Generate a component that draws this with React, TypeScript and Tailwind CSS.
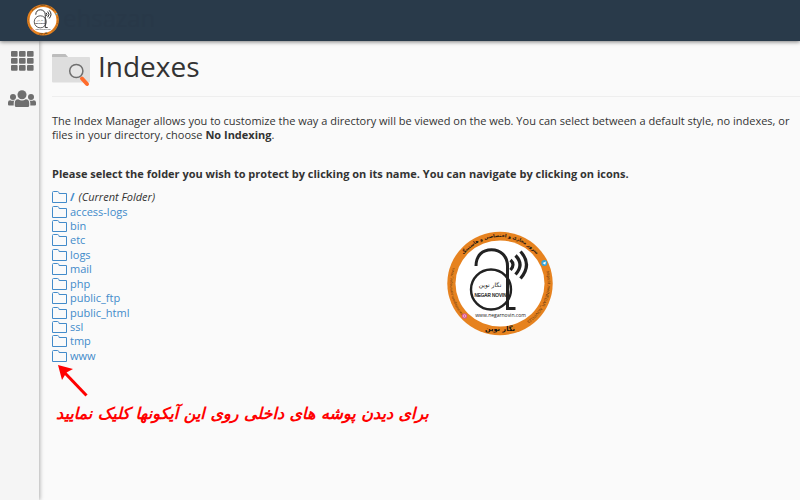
import { useId } from 'react';

const FOLDERS = [
  'access-logs',
  'bin',
  'etc',
  'logs',
  'mail',
  'php',
  'public_ftp',
  'public_html',
  'ssl',
  'tmp',
  'www',
];

function FolderOutline() {
  return (
    <svg viewBox="0 0 16 12" className="h-3 w-4 shrink-0" fill="none" stroke="#428bca" aria-hidden="true">
      <path d="M.5 1.5Q.5.5 1.5.5H5.5Q6.5.5 6.8 1.5L7.1 2.5H14.5V11.5H.5Z" />
    </svg>
  );
}

function AppsIcon() {
  return (
    <svg viewBox="0 0 24 20" className="h-5 w-6" fill="#6f6f6f" aria-hidden="true">
      {[0, 7, 14].map((y) =>
        [1, 9, 17].map((x) => <rect key={`${x}-${y}`} x={x} y={y} width="6.6" height="5.8" rx="1" />),
      )}
    </svg>
  );
}

function UsersIcon() {
  return (
    <svg viewBox="0 0 28 17" className="h-[17px] w-7" fill="#6f6f6f" aria-hidden="true">
      <circle cx="14" cy="4.7" r="4.5" />
      <circle cx="5" cy="7" r="3" />
      <circle cx="23" cy="7" r="3" />
      <path d="M6.8 15.5V13Q6.8 9.3 10.2 9.2Q14 12 17.8 9.2Q21.2 9.3 21.2 13V15.5Q21.2 17 19.7 17H8.3Q6.8 17 6.8 15.5Z" />
      <path d="M0 14.5V12.5Q0 10.3 2.3 10.2Q4.5 11.3 6.6 10.2Q5.7 11.5 5.7 13V15.5H1Q0 15.5 0 14.5Z" />
      <path d="M28 14.5V12.5Q28 10.3 25.7 10.2Q23.5 11.3 21.4 10.2Q22.3 11.5 22.3 13V15.5H27Q28 15.5 28 14.5Z" />
    </svg>
  );
}

function IndexesIcon() {
  return (
    <svg viewBox="0 0 38 34" className="mt-1 h-[34px] w-[38px] shrink-0" aria-hidden="true">
      <path d="M0 5V2Q0 1 1 1H13.5L16 4V5Z" fill="#bdbdbd" />
      <path d="M0 4H37Q38 4 38 5V28.5Q38 29.5 37 29.5H1Q0 29.5 0 28.5Z" fill="#dedede" />
      <path d="M30 25.5L35 31" stroke="#ff6c2c" strokeWidth="4" strokeLinecap="round" />
      <circle cx="24.3" cy="18" r="6.6" fill="#e6e6e6" stroke="#6f6f6f" strokeWidth="1.5" />
    </svg>
  );
}

function NegarNovinLogo({ className }: { className: string }) {
  const id = useId();

  return (
    <svg viewBox="7 6 106 105" className={className} role="img" aria-label="Negar Novin">
      <defs>
        <path id={`${id}top`} d="M13.5 58.5A46.5 46.5 0 0 1 106.500 58.500" />
        <path id={`${id}left`} d="M45 103.500A47 46.500 0 0 1 25 27" />
        <path id={`${id}right`} d="M105.500 44A47 46.500 0 0 1 80 100" />
      </defs>
      <ellipse cx="60" cy="58.5" rx="52.7" ry="51.7" fill="#e6821f" />
      <ellipse cx="60" cy="58.5" rx="44.5" ry="43" fill="#fff" />

      {/* Padlock "a" with signal waves */}
      <g fill="none" stroke="#222">
        <path d="M36 41C36 30.5 42.5 24.7 51.5 24.7S67.5 31 67.5 41V83.5H75.5" strokeWidth="3" />
        <circle cx="51" cy="64.5" r="20" strokeWidth="2.4" />
        <g strokeWidth="3.2">
          <path d="M70.5 35Q75.5 39.5 70.5 45" />
          <path d="M75.500 30.500Q84.500 39.500 75.500 49.500" />
          <path d="M80.500 26.500Q92.500 39.500 80.500 53.500" />
        </g>
      </g>

      <g fill="#222" textAnchor="middle">
        <text x="50" y="61.5" fontSize="6" fontFamily="DejaVu Sans, sans-serif">نگار نوین</text>
        <text x="50.5" y="71.7" fontSize="4.6" fontFamily="Liberation Sans, sans-serif" stroke="#222" strokeWidth=".2">NEGAR NOVIN</text>
        <text x="60.5" y="92" fontSize="5" fontFamily="Open Sans, sans-serif">www.negarnovin.com</text>
        <text x="60" y="106" fontSize="6.600" fontWeight="700" fontFamily="DejaVu Sans, sans-serif" fill="#111">نگار نوین</text>
        <text fontSize="4.6" fontWeight="700" fontFamily="DejaVu Sans, sans-serif" fill="#111">
          <textPath href={`#${id}top`} startOffset="50%">سرور مجازی و اختصاصی و هاستینگ</textPath>
        </text>
        <text fontSize="3.5" fontFamily="Liberation Sans, sans-serif" fill="#5c330c">
          <textPath href={`#${id}left`} startOffset="52%">www.instagram.com/negar_novin</textPath>
        </text>
        <text fontSize="4" fontFamily="Liberation Sans, sans-serif" fill="#5c330c">
          <textPath href={`#${id}right`} startOffset="46%">https://t.me/NEGAR_NOVIN123</textPath>
        </text>
      </g>

      <circle cx="104.3" cy="38" r="3" fill="#2fa5dc" />
      <path d="M102.5 38L106 36.5L105.2 39.8L104 39Z" fill="#fff" />
      <rect x="22" y="88.5" width="5" height="5" rx="1.5" fill="#d9548c" />
      <circle cx="24.5" cy="91" r="1.3" fill="none" stroke="#fff" strokeWidth=".5" />
    </svg>
  );
}

function FolderRow({ name }: { name: string }) {
  return (
    <li className="flex items-center gap-[2px] text-[#428bca]">
      <a href="#open" aria-label={`Open ${name}`}>
        <FolderOutline />
      </a>
      <a href="#select">{name}</a>
    </li>
  );
}

export default function App() {
  return (
    <div className="flex min-h-screen flex-col overflow-hidden bg-[#fafafa] font-['Open_Sans',sans-serif] text-[11px] leading-[14px] text-[#333]">
      <header className="z-10 flex h-[41px] items-start gap-1 bg-[#293a4a] pl-[27px] pt-1 shadow-[0_1px_4px_rgba(0,0,0,0.5)]">
        <NegarNovinLogo className="size-8" />
        <span className="text-2xl leading-7 text-[#283848]">ehsazan</span>
      </header>

      <div className="flex flex-1">
        <nav className="flex w-[39px] shrink-0 flex-col items-center gap-[19px] bg-[#f5f5f5] pl-1 pt-[10px] shadow-[1px_0_4px_rgba(0,0,0,0.3)]">
          <a href="#home" aria-label="Home">
            <AppsIcon />
          </a>
          <a href="#users" aria-label="User manager">
            <UsersIcon />
          </a>
        </nav>

        <main className="relative min-w-0 flex-1 overflow-hidden pl-[13px] pt-2">
          <div className="flex items-start gap-2 border-b border-[#eee] pb-[9px]">
            <IndexesIcon />
            <h1 className="text-[28px] leading-[34px]">Indexes</h1>
          </div>

          <p className="mt-[17px] whitespace-nowrap">
            The Index Manager allows you to customize the way a directory will be viewed on the web. You can select between a default style, no indexes, or
            <br />
            files in your directory, choose <b>No Indexing</b>.
          </p>

          <p className="mt-[25px] font-bold">
            Please select the folder you wish to protect by clicking on its name. You can navigate by clicking on icons.
          </p>

          <ul className="mt-[9px] grid min-h-[173px] auto-rows-fr">
            <li className="flex items-center gap-[2px]">
              <a href="#open" aria-label="Open /">
                <FolderOutline />
              </a>
              <a href="#select" className="font-bold text-[#428bca]">/</a>
              <i className="pl-[2px]">(Current Folder)</i>
            </li>
            {FOLDERS.map((name) => (
              <FolderRow key={name} name={name} />
            ))}
          </ul>

          {/* Tutorial note pointing at the folder icons */}
          <svg viewBox="0 0 32 34" className="ml-[5px] mt-px h-[34px] w-8" aria-hidden="true">
            <path d="M7 8L29.5 31.5" stroke="#f00" strokeWidth="3" />
            <path d="M1 1L16 5L9.5 8.5L5 16Z" fill="#f00" />
          </svg>
          <p dir="rtl" className="ml-1 mt-1 w-fit whitespace-nowrap font-['DejaVu_Sans',sans-serif] text-base leading-6 font-bold italic text-[#f00]">
            برای دیدن پوشه های داخلی روی این آیکونها کلیک نمایید
          </p>

          <NegarNovinLogo className="absolute left-[408px] top-[190px] h-[105px] w-[106px]" />
        </main>
      </div>
    </div>
  );
}
